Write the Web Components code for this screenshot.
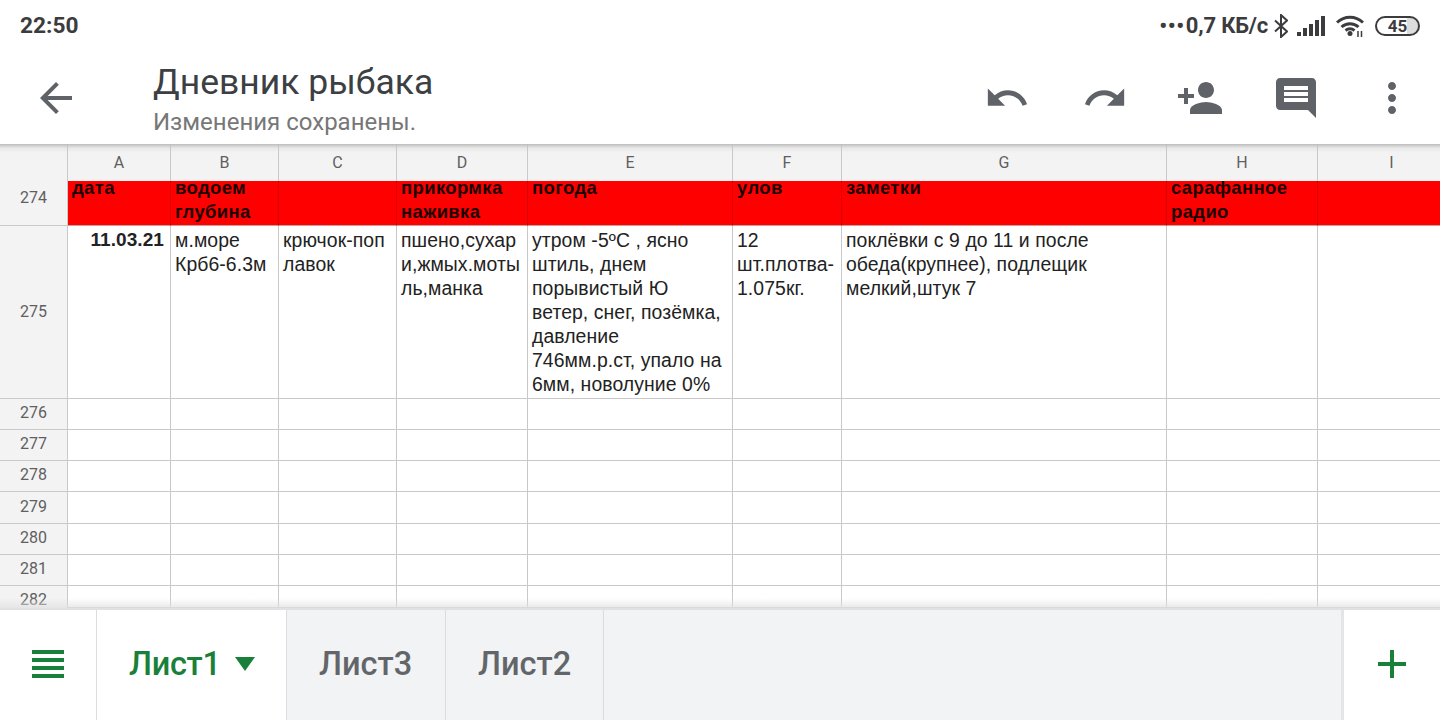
<!DOCTYPE html>
<html lang="ru"><head><meta charset="utf-8"><title>Дневник рыбака</title>
<style>
html,body{margin:0;padding:0;background:#fff;height:100%;overflow:hidden}
body{font-family:Roboto,"Liberation Sans",sans-serif}
#app{display:flex;flex-direction:column;width:1440px;height:720px}
</style></head><body>
<div id="app">
<status-bar></status-bar>
<app-bar title="Дневник рыбака" subtitle="Изменения сохранены."></app-bar>
<sheet-grid></sheet-grid>
<tab-bar></tab-bar>
</div>
<script>
const ICONS={
 back:'M20 11H7.83l5.59-5.59L12 4l-8 8 8 8 1.41-1.41L7.83 13H20v-2z',
 undo:'M12.5 8c-2.65 0-5.05.99-6.9 2.6L2 7v9h9l-3.62-3.62c1.39-1.16 3.16-1.88 5.12-1.88 3.54 0 6.55 2.31 7.6 5.5l2.37-.78C21.08 11.03 17.15 8 12.5 8z',
 redo:'M18.4 10.6C16.55 8.99 14.15 8 11.5 8c-4.65 0-8.58 3.03-9.96 7.22L3.9 16c1.05-3.19 4.05-5.5 7.6-5.5 1.95 0 3.73.72 5.12 1.88L13 16h9V7l-3.6 3.6z',
 person:'M15 12c2.21 0 4-1.79 4-4s-1.79-4-4-4-4 1.79-4 4 1.79 4 4 4zm-9-2V7H4v3H1v2h3v3h2v-3h3v-2H6zm9 4c-2.67 0-8 1.34-8 4v2h16v-2c0-2.66-5.33-4-8-4z',
 comment:'M21.99 4c0-1.1-.89-2-1.99-2H4c-1.1 0-2 .9-2 2v12c0 1.1.9 2 2 2h14l4 4-.01-18zM18 14H6v-2h12v2zm0-3H6V9h12v2zm0-3H6V6h12v2z',
 more:'M12 8c1.1 0 2-.9 2-2s-.9-2-2-2-2 .9-2 2 .9 2 2 2zm0 2c-1.1 0-2 .9-2 2s.9 2 2 2 2-.9 2-2-.9-2-2-2zm0 6c-1.1 0-2 .9-2 2s.9 2 2 2 2-.9 2-2-.9-2-2-2z'
};
class IconButton extends HTMLElement{
 connectedCallback(){
  const s=this.getAttribute('size')||48,d=ICONS[this.getAttribute('icon')],sh=this.getAttribute('shift')||0;
  this.attachShadow({mode:'open'}).innerHTML=`<style>:host{display:flex;align-items:center;justify-content:center;width:96px;height:100%;color:#5f6368}svg{display:block;fill:currentColor;margin-left:${sh}px}</style>
  <svg width="${s}" height="${s}" viewBox="0 0 24 24"><path d="${d}"/></svg>`;
 }
}
customElements.define('icon-button',IconButton);

class StatusBar extends HTMLElement{
 constructor(){super();this.attachShadow({mode:'open'}).innerHTML=`<style>
 :host{display:flex;align-items:center;justify-content:space-between;height:52px;flex:none;padding:0 20px;box-sizing:border-box;background:#fff;color:#3c3c3e;font:700 22.7px/1 Roboto,sans-serif}
 .r{display:flex;align-items:center}
 .net{font-size:22px;letter-spacing:-.2px;white-space:nowrap}
 .d{letter-spacing:.6px;margin-right:1px}
 svg{display:block;flex:none}
 .bat{box-sizing:border-box;width:45px;height:20px;margin-left:11px;border:2px solid #3c3c3e;border-radius:10px;display:flex;align-items:center;justify-content:center;font-size:17px;background:linear-gradient(90deg,#fff 72%,#ddd 72%)}
 </style>
 <span>22:50</span>
 <div class="r">
  <span class="net"><span class="d">•••</span>0,7 КБ/с</span>
  <svg style="margin-left:6px" width="14" height="24" viewBox="0 0 14 24" fill="none" stroke="#3c3c3e" stroke-width="2"><path d="M1 6.5l12 11-6 5.5V1l6 5.5-12 11"/></svg>
  <svg style="margin-left:9px" width="28" height="20" viewBox="0 0 28 20" fill="#3c3c3e"><rect x="0" y="16" width="4" height="4"/><rect x="6" y="12" width="4" height="8"/><rect x="12" y="8" width="4" height="12"/><rect x="18" y="4" width="4" height="16"/><rect x="24" y="0" width="4" height="20"/></svg>
  <svg style="margin-left:11px" width="28" height="22" viewBox="0 0 28 22" fill="none" stroke="#3c3c3e" stroke-width="3"><path d="M1 7.5C8.5 .5 19.5 .5 27 7.5"/><path d="M5.5 12c5-4.5 12-4.5 17 0"/><path d="M9.5 15.500c2.700-2 6.300-2 9 0"/><circle cx="14" cy="18.500" r="2.500" fill="#3c3c3e" stroke="none"/><path d="M22 16v6M25.500 16v6" stroke-width="1.500"/></svg>
  <div class="bat">45</div>
 </div>`;}
}
customElements.define('status-bar',StatusBar);

class AppBar extends HTMLElement{
 connectedCallback(){
  this.attachShadow({mode:'open'}).innerHTML=`<style>
  :host{display:flex;align-items:stretch;height:92px;flex:none;background:#fff;position:relative;z-index:2;font-family:Roboto,sans-serif}
  .back{width:48px;margin-left:32px}
  .t{flex:1;margin-left:73px;display:flex;flex-direction:column}
  .h{font-size:35.500px;line-height:40px;color:#3c4043;margin-top:10px}
  .s{font-size:24px;line-height:26px;color:#777;margin-top:7px}
  .a{display:flex;height:92px}
  icon-button{height:92px}
  </style>
  <icon-button class="back" icon="back"></icon-button>
  <div class="t"><div class="h">${this.getAttribute('title')}</div><div class="s">${this.getAttribute('subtitle')}</div></div>
  <div class="a"><icon-button icon="undo" size="46" shift="-2"></icon-button><icon-button icon="redo" size="46" shift="2"></icon-button><icon-button icon="person"></icon-button><icon-button icon="comment"></icon-button><icon-button icon="more"></icon-button></div>`;
  this.removeAttribute('title');
 }
}
customElements.define('app-bar',AppBar);

class SheetCell extends HTMLElement{
 constructor(){super();this.attachShadow({mode:'open'}).innerHTML=`<style>
 :host{display:block;box-sizing:border-box;overflow:hidden;border-right:1px solid #c9c9c9;border-bottom:1px solid #c9c9c9;background:#fff;color:#222;font:19.400px/24px "Liberation Sans",Arial,sans-serif;letter-spacing:.08px;white-space:nowrap;min-width:0;min-height:0}
 :host([kind=head]){background:#f3f3f3;color:#5f5f5f;font:16px/1 Roboto,sans-serif;letter-spacing:0;display:flex;align-items:center;justify-content:center}
 :host([kind=red]){background:#f00;color:#1a0000;font-weight:700;font-size:18.500px;letter-spacing:.35px;border-right-color:#d80000;border-bottom-color:#c9a0a0}
 :host([kind=red]) .w{margin-top:-7px}
 :host([kind=date]) .w{text-align:right;font-weight:700;font-size:19px;padding-right:6px}
 .w{padding:2px 4px 0 4px;}
 :host([kind=head]) .w{padding:0}
 </style><div class="w"><slot></slot></div>`;}
}
customElements.define('sheet-cell',SheetCell);

class SheetGrid extends HTMLElement{
 constructor(){super();
  const root=this.attachShadow({mode:'open'});
  root.innerHTML=`<style>
  :host{display:block;flex:none;height:464px;position:relative;overflow:hidden;background:#fff}
  .g{display:grid;height:100%;grid-template-columns:68px 103px 108px 118px 131px 205px 109px 325px 151px 148px;grid-template-rows:37px 45px 173px 31px 31px 31px 32px 31px 31px 22px}
  .top,.bot{position:absolute;left:0;right:0;pointer-events:none}
  .top{top:0;height:9px;background:linear-gradient(#bdbdbd,rgba(200,200,200,.25) 45%,rgba(255,255,255,0))}
  .bot{bottom:0;height:10px;background:linear-gradient(rgba(235,235,235,0),rgba(225,225,225,.75))}
  </style><div class="g"></div><div class="top"></div><div class="bot"></div>`;
  const g=root.querySelector('.g');
  const add=(html,kind,st)=>{const c=document.createElement('sheet-cell');if(kind)c.setAttribute('kind',kind);if(st)c.setAttribute('style',st);c.innerHTML=html;g.append(c);};
  ['','A','B','C','D','E','F','G','H','I'].forEach(c=>add(c,'head','border-bottom:0'));
  add('274','head','padding-bottom:10px');
  ['дата','водоем<br>глубина','','прикормка<br>наживка','погода','улов','заметки','сарафанное<br>радио',''].forEach(t=>add(t,'red'));
  add('275','head');
  add('11.03.21','date');
  add('м.море<br>Крб6-6.3м');
  add('крючок-поп<br>лавок');
  add('пшено,сухар<br>и,жмых.моты<br>ль,манка');
  add('утром -5ºC , ясно<br>штиль, днем<br>порывистый Ю<br>ветер, снег, позёмка,<br>давление<br>746мм.р.ст, упало на<br>6мм, новолуние 0%');
  add('12<br>шт.плотва-<br>1.075кг.');
  add('поклёвки с 9 до 11 и после<br>обеда(крупнее), подлещик<br>мелкий,штук 7');
  add('');add('');
  for(let r=276;r<=282;r++){add(String(r),'head',r==282?'padding-top:5px;border-bottom:0':'padding-bottom:2px');for(let i=0;i<9;i++)add('');}
 }
}
customElements.define('sheet-grid',SheetGrid);

class SheetTab extends HTMLElement{
 constructor(){super();this.attachShadow({mode:'open'}).innerHTML=`<style>
 :host{display:flex;align-items:center;box-sizing:border-box;height:100%;padding:0 32px 2px;border-right:1px solid #dadce0;background:#f1f3f4;color:#62666a;font:500 32.500px/1 Roboto,sans-serif}
 :host([active]){background:#fff;color:#188038}
 .c{display:none;width:0;height:0;margin-left:14px;border-left:10px solid transparent;border-right:10px solid transparent;border-top:14px solid #188038;margin-top:-1px}
 :host([active]) .c{display:block}
 ::slotted(*){letter-spacing:0}
 </style><slot></slot><span class="c"></span>`;}
}
customElements.define('sheet-tab',SheetTab);

class TabBar extends HTMLElement{
 constructor(){super();this.attachShadow({mode:'open'}).innerHTML=`<style>
 :host{display:flex;flex:none;height:112px;box-sizing:border-box;border-top:2px solid #dfe1e3;background:#f1f3f4;position:relative;z-index:1}
 .m,.p{flex:none;width:96px;background:#fff;display:flex;align-items:center;justify-content:center;box-sizing:border-box}
 .m{border-right:1px solid #dadce0;width:97px}
 .p{margin-left:auto;box-shadow:-3px 0 0 #e3e5e7}
 svg{display:block;fill:#188038}
 </style>
 <div class="m"><svg width="32" height="28" viewBox="0 0 32 28" style="margin-top:-2px"><rect width="32" height="4"/><rect y="8" width="32" height="4"/><rect y="16" width="32" height="4"/><rect y="24" width="32" height="4"/></svg></div>
 <sheet-tab active style="width:190px;letter-spacing:-.3px">Лист1</sheet-tab>
 <sheet-tab style="width:159px">Лист3</sheet-tab>
 <sheet-tab style="width:158px">Лист2</sheet-tab>
 <div class="p"><svg width="28" height="28" viewBox="0 0 28 28" style="margin-top:-2px"><rect x="12" width="4" height="28"/><rect y="12" width="28" height="4"/></svg></div>`;}
}
customElements.define('tab-bar',TabBar);
</script>
</body></html>
